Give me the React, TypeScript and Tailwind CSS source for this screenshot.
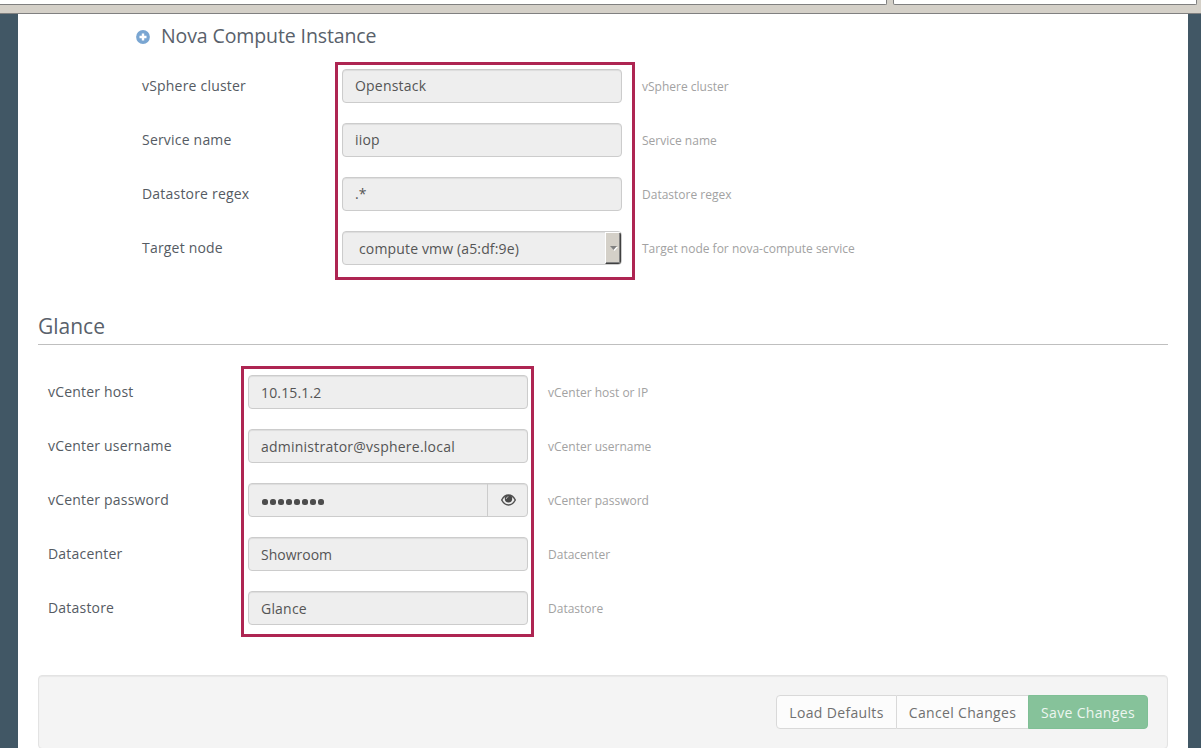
import type { ReactNode } from "react";

type Row = { label: string; hint: string; control: ReactNode };

const box =
  "flex h-[34px] w-[280px] items-center rounded-[4px] border border-[#cccccc] bg-[#eeeeee] text-[14px] text-[#555555] shadow-[inset_0_1px_1px_rgba(0,0,0,0.075)]";

function TextBox({ value, className = "" }: { value: string; className?: string }) {
  return (
    <div className={box}>
      <span className={`pl-3 ${className}`}>{value}</span>
    </div>
  );
}

function SelectBox({ value }: { value: string }) {
  return (
    <div className={`${box} justify-between overflow-hidden`}>
      <span className="pl-4 tracking-[0.15px]">{value}</span>
      <span className="flex h-[32px] w-[16px] items-center justify-center border-t border-r border-b border-l border-t-white border-r-[#404040] border-b-[#404040] border-l-white bg-[#d4d0c8] shadow-[inset_-1px_-1px_0_#808080]">
        <svg width="9" height="5" viewBox="0 0 9 5">
          <path d="M2 1h7L5.5 5z" fill="#fff" />
          <path d="M1 0h7L4.5 4z" fill="#808080" />
        </svg>
      </span>
    </div>
  );
}

function PasswordBox() {
  return (
    <div className={box}>
      <span className="flex flex-1 items-center gap-[2px] pt-[4px] pl-[13px]">
        {Array.from({ length: 8 }, (_, i) => (
          <i key={i} className="h-[6px] w-[6px] rounded-[2.5px] bg-[#4d4d4d]" />
        ))}
      </span>
      <span className="flex h-full w-[40px] items-center justify-center border-l border-[#cccccc]">
        <svg width="15" height="12" viewBox="0 0 15 12" className="ml-[2px]">
          <path d="M.7 6C2.5 2.7 4.8 1.1 7.5 1.1S12.500 2.700 14.300 6C12.500 9.300 10.200 10.900 7.500 10.900S2.500 9.300.7 6z" fill="#eee" stroke="#505050" strokeWidth="1.5" />
          <circle cx="7.500" cy="4.800" r="3.700" fill="#484848" />
          <path d="M5.300 5A2.300 2.300 0 0 1 7.400 2.700" fill="none" stroke="#ccc" strokeWidth="0.8" />
        </svg>
      </span>
    </div>
  );
}

const novaRows: Row[] = [
  { label: "vSphere cluster", hint: "vSphere cluster", control: <TextBox value="Openstack" className="pb-[2px] tracking-[0.2px]" /> },
  { label: "Service name", hint: "Service name", control: <TextBox value="iiop" className="pb-[2px] tracking-[0.2px]" /> },
  { label: "Datastore regex", hint: "Datastore regex", control: <TextBox value=".*" className="pb-[2px]" /> },
  { label: "Target node", hint: "Target node for nova-compute service", control: <SelectBox value="compute vmw (a5:df:9e)" /> },
];

const glanceRows: Row[] = [
  { label: "vCenter host", hint: "vCenter host or IP", control: <TextBox value="10.15.1.2" className="tracking-[0.15px]" /> },
  { label: "vCenter username", hint: "vCenter username", control: <TextBox value="administrator@vsphere.local" className="tracking-[0.23px]" /> },
  { label: "vCenter password", hint: "vCenter password", control: <PasswordBox /> },
  { label: "Datacenter", hint: "Datacenter", control: <TextBox value="Showroom" /> },
  { label: "Datastore", hint: "Datastore", control: <TextBox value="Glance" className="tracking-[0.2px]" /> },
];

function Fields({ rows, labels, frame, hints }: { rows: Row[]; labels: string; frame: string; hints: string }) {
  return (
    <div className="flex items-start">
      <div className={`flex flex-col gap-5 text-[14px] tracking-[0.2px] text-[#555b63] ${labels}`}>
        {rows.map((r) => (
          <div key={r.label} className="flex h-[34px] items-center">{r.label}</div>
        ))}
      </div>
      <div className={`flex flex-col gap-5 border-[3px] border-[#ae2552] pl-1 ${frame}`}>
        {rows.map((r) => (
          <div key={r.label}>{r.control}</div>
        ))}
      </div>
      <div className={`flex flex-col gap-5 text-[12px] text-[#a2a2a2] ${hints}`}>
        {rows.map((r) => (
          <div key={r.label} className="flex h-[34px] items-center">{r.hint}</div>
        ))}
      </div>
    </div>
  );
}

export default function App() {
  return (
    <div className="flex h-[748px] w-[1201px] flex-col overflow-hidden bg-white font-['Open_Sans','Noto_Sans',sans-serif]">
      <header className="flex h-[14px] shrink-0 items-start border-b border-[#808080] bg-[#d4d0c8]">
        <div className="h-[5px] w-[887px] rounded-br-[2px] border-r border-b border-[#808080] bg-white" />
        <div className="ml-[6px] h-[5px] w-[304px] rounded-b-[2px] border-x border-b border-[#808080] bg-white" />
      </header>
      <div className="flex min-h-0 flex-1 bg-[#415765] pr-[13px] pl-[18px]">
        <main className="h-full flex-1 overflow-hidden bg-white px-5">
          <h2 className="flex h-[48px] items-start pt-[8px] pl-[98px] text-[19.5px] leading-[28px] tracking-[-0.11px] text-[#59616b]">
            <svg width="14" height="14" viewBox="0 0 14 14" className="mt-[8px] mr-[11px]">
              <circle cx="7" cy="7" r="6.900" fill="#7aa6d2" />
              <path d="M7 3.500v7M3.500 7h7" stroke="#fff" strokeWidth="2.400" />
            </svg>
            Nova Compute Instance
          </h2>
          <Fields rows={novaRows} labels="w-[297px] pl-[104px] pt-[6px]" frame="h-[218px] w-[300px] pt-1" hints="pl-[7px] pt-[8px]" />
          <h1 className="mt-[28px] h-[37px] border-b border-[#bfbfbf] pt-[4px] text-[21px] leading-[28px] text-[#59616b]">Glance</h1>
          <div className="pt-[21px]">
            <Fields rows={glanceRows} labels="w-[203px] pl-[10px] pt-[8px]" frame="h-[271px] w-[293px] pt-[6px]" hints="pl-[14px] pt-[10px]" />
          </div>
          <footer className="mt-[38px] flex h-[74px] items-start justify-end rounded-[4px] border border-[#e3e3e3] bg-[#f4f4f4] pt-[19px] pr-[19px] text-[14px] tracking-[0.33px] text-[#707070] shadow-[inset_0_1px_1px_rgba(0,0,0,0.05)]">
            <button className="h-[34px] w-[121px] rounded-l-[4px] border border-[#d9d9d9] bg-[#fcfcfc]">Load Defaults</button>
            <button className="h-[34px] w-[131px] border-y border-[#d9d9d9] bg-[#fcfcfc]">Cancel Changes</button>
            <button className="h-[34px] w-[120px] rounded-r-[4px] border border-[#7fbf95] bg-[#86c29a] text-[#edf6f0]">Save Changes</button>
          </footer>
        </main>
      </div>
    </div>
  );
}
